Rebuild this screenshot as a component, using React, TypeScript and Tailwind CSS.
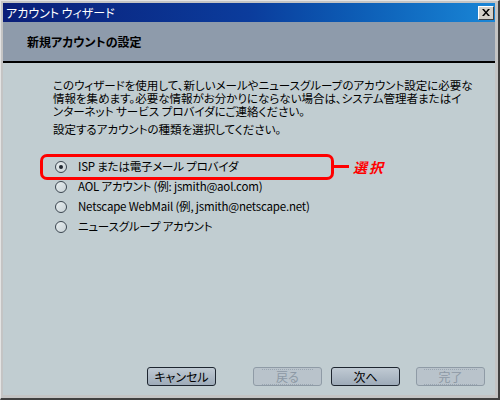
import React from 'react';

const JP = "font-['Noto_Sans_CJK_JP','Noto_Sans',sans-serif] [font-feature-settings:'palt']";

const OPTIONS = [
  'ISP または電子メール プロバイダ',
  'AOL アカウント (例: jsmith@aol.com)',
  'Netscape WebMail (例, jsmith@netscape.net)',
  'ニュースグループ アカウント',
];

function Radio({ checked }: { checked?: boolean }) {
  return (
    <span className="w-[12px] h-[12px] rounded-full border border-[#3c4650] bg-gradient-to-br from-[#e8eef0] to-[#c8d2d6] flex items-center justify-center shrink-0">
      {checked && <span className="w-[4px] h-[4px] rounded-full bg-[#202830]" />}
    </span>
  );
}

function WizButton({ label, disabled, left }: { label: string; disabled?: boolean; left: number }) {
  return (
    <button
      className={
        'absolute top-[0px] w-[69px] h-[19px] rounded-[3px] border text-[12px] leading-none flex items-center justify-center ' +
        (disabled
          ? 'border-[#8f9ba6] bg-[#b9c3cb] text-[#8c98a4]'
          : 'border-[#1e2630] bg-gradient-to-b from-[#c0cad3] to-[#9eabb9] text-black')
      }
      style={{ left }}
    >
      <span className={disabled ? 'border border-dotted border-[#9aa6b2] px-[14px] py-[1px] border-l-0 border-r-0' : ''}>{label}</span>
    </button>
  );
}

export default function App() {
  return (
    <div className={`${JP} w-[500px] h-[400px] bg-[#c4c4c4] border-l border-t border-l-[#e4e4e4] border-t-[#e4e4e4] border-r-2 border-b-2 border-r-[#404040] border-b-[#404040] pl-[2px] pt-[2px] pr-[3px] pb-[3px] flex flex-col overflow-hidden`}>
      {/* Title bar */}
      <div className="h-[19px] shrink-0 bg-gradient-to-r from-[#0a1e78] via-[#0b3c9c] to-[#1a86d6] flex items-center justify-between pl-[3px] pr-[1px]">
        <span className="text-white text-[12px] leading-none">アカウント ウィザード</span>
        <span className="w-[16px] h-[14px] bg-[#d4d0c8] border border-t-white border-l-white border-r-[#404040] border-b-[#404040] flex items-center justify-center">
          <svg width="8" height="7" viewBox="0 0 8 7">
            <path d="M0 0h2l2 2.5L6 0h2L5 3.5 8 7H6L4 4.5 2 7H0l3-3.5z" fill="#000" />
          </svg>
        </span>
      </div>

      {/* Header */}
      <div className="h-[39px] shrink-0 bg-[#8e9bab] flex items-center pl-[24px]">
        <span className="text-[12px] font-bold text-black">新規アカウントの設定</span>
      </div>
      <div className="h-[2px] shrink-0 bg-black" />

      {/* Body */}
      <div className="relative flex-1 bg-[#c1cdd1] pl-[50px] pt-[16px] text-[11.5px] text-black">
        <div className="leading-[13px] whitespace-nowrap">
          <div>このウィザードを使用して、新しいメールやニュースグループのアカウント設定に必要な</div>
          <div>情報を集めます。必要な情報がお分かりにならない場合は、システム管理者またはイ</div>
          <div>ンターネット サービス プロバイダにご連絡ください。</div>
        </div>
        <p className="mt-[5px] leading-[13px]">設定するアカウントの種類を選択してください。</p>

        <div className="mt-[21px] flex flex-col">
          {OPTIONS.map((o, i) => (
            <div key={o} className="h-[20px] flex items-center gap-[11px] pl-[2px]">
              <Radio checked={i === 0} />
              <span className="whitespace-nowrap tracking-[-0.2px]">{o}</span>
            </div>
          ))}
        </div>

        {/* Annotation */}
        <div className="absolute left-[37px] top-[91px] w-[294px] h-[26px] border-[3px] border-[#ff0000] rounded-[7px]" />
        <div className="absolute left-[330px] top-[102px] w-[16px] h-[3px] bg-[#ff0000]" />
        <span className="absolute left-[350px] top-[94px] text-[14px] font-bold italic text-[#ff0000] tracking-[2px]">選択</span>

        {/* Buttons */}
        <div className="absolute left-0 right-0 top-[304px] h-[19px]">
          <WizButton label="キャンセル" left={144} />
          <WizButton label="戻る" left={250} disabled />
          <WizButton label="次へ" left={328} />
          <WizButton label="完了" left={413} disabled />
        </div>
      </div>
    </div>
  );
}
